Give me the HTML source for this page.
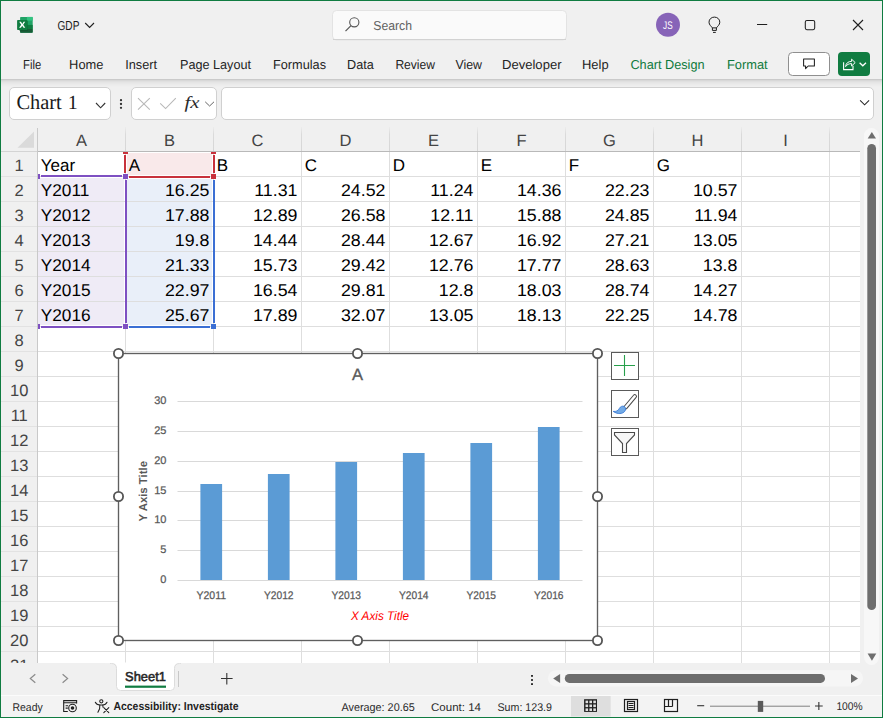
<!DOCTYPE html>
<html><head><meta charset="utf-8"><title>GDP - Excel</title>
<style>html,body{margin:0;padding:0;background:#f0f0f0;overflow:hidden;width:883px;height:718px;}svg{display:block}</style>
</head><body>
<svg width="883" height="718" viewBox="0 0 883 718" text-rendering="geometricPrecision">
<rect x="0" y="0" width="883" height="718" fill="#f0f0f0"/>
<g>
<rect x="20.1" y="16.9" width="12.6" height="15.8" rx="0.8" fill="#21a366"/>
<rect x="26.9" y="16.9" width="5.8" height="3.7" fill="#33c481"/>
<rect x="20.1" y="24.9" width="12.6" height="4.1" fill="#107c41"/>
<rect x="20.1" y="29" width="12.6" height="3.7" rx="0.6" fill="#185c37"/>
<rect x="19" y="21" width="9" height="10" fill="#0a4a26" opacity="0.35"/>
<rect x="17.1" y="20" width="10.4" height="10" rx="0.8" fill="#107c41"/>
<path d="M19.2 21.8 L21 21.8 L22.3 23.9 L23.6 21.8 L25.2 21.8 L23.2 24.8 L25.3 27.8 L23.5 27.8 L22.2 25.7 L20.9 27.8 L19.1 27.8 L21.2 24.8 Z" fill="#fff"/>
</g>
<text x="57.5" y="29.8" font-family='"Liberation Sans", sans-serif' font-size="13" fill="#1a1a1a" text-anchor="start" font-weight="normal" font-style="normal" textLength="21.9" lengthAdjust="spacingAndGlyphs" >GDP</text>
<path d="M85.2 23 L89.6 27.5 L94 23" fill="none" stroke="#1f1f1f" stroke-width="1.1"/>
<rect x="332.5" y="10.5" width="234" height="29.5" rx="4" fill="#fafafa" stroke="#e3e3e3"/>
<path d="M333 39.5 L566 39.5" stroke="#d2d2d2"/>
<circle cx="354.3" cy="22.3" r="4.6" fill="none" stroke="#555" stroke-width="1.1"/>
<path d="M351 25.6 L345.5 31.2" stroke="#555" stroke-width="1.2"/>
<text x="373.3" y="30" font-family='"Liberation Sans", sans-serif' font-size="13" fill="#616161" text-anchor="start" font-weight="normal" font-style="normal" textLength="38.7" lengthAdjust="spacingAndGlyphs" >Search</text>
<circle cx="668" cy="24.8" r="12" fill="#8764b8"/>
<text x="667.9" y="28.8" font-family='"Liberation Sans", sans-serif' font-size="11" fill="#fff" text-anchor="middle" font-weight="normal" font-style="normal" textLength="9.6" lengthAdjust="spacingAndGlyphs" >JS</text>
<path d="M712.4 27.9 C711.6 26.6 709 24.9 709 22.2 C709 19.2 711.4 17.1 714.4 17.1 C717.4 17.1 719.8 19.2 719.8 22.2 C719.8 24.9 717.2 26.6 716.4 27.9 Z M712.4 27.9 L712.4 30.4 L716.4 30.4 L716.4 27.9" fill="none" stroke="#1f1f1f" stroke-width="1"/>
<path d="M713 32.4 L715.8 32.4" stroke="#1f1f1f" stroke-width="1"/>
<path d="M757 24.5 L767.2 24.5" stroke="#1f1f1f" stroke-width="1.05"/>
<rect x="805.3" y="20.5" width="9.4" height="9.2" rx="1.6" fill="none" stroke="#1f1f1f" stroke-width="1.05"/>
<path d="M853 20 L863 30 M863 20 L853 30" stroke="#1f1f1f" stroke-width="1.1"/>
<text x="23.1" y="69.2" font-family='"Liberation Sans", sans-serif' font-size="13" fill="#242424" text-anchor="start" font-weight="normal" font-style="normal" textLength="18.1" lengthAdjust="spacingAndGlyphs" >File</text>
<text x="69.1" y="69.2" font-family='"Liberation Sans", sans-serif' font-size="13" fill="#242424" text-anchor="start" font-weight="normal" font-style="normal" textLength="34.3" lengthAdjust="spacingAndGlyphs" >Home</text>
<text x="125.2" y="69.2" font-family='"Liberation Sans", sans-serif' font-size="13" fill="#242424" text-anchor="start" font-weight="normal" font-style="normal" textLength="31.8" lengthAdjust="spacingAndGlyphs" >Insert</text>
<text x="180" y="69.2" font-family='"Liberation Sans", sans-serif' font-size="13" fill="#242424" text-anchor="start" font-weight="normal" font-style="normal" textLength="71" lengthAdjust="spacingAndGlyphs" >Page Layout</text>
<text x="273" y="69.2" font-family='"Liberation Sans", sans-serif' font-size="13" fill="#242424" text-anchor="start" font-weight="normal" font-style="normal" textLength="53" lengthAdjust="spacingAndGlyphs" >Formulas</text>
<text x="347" y="69.2" font-family='"Liberation Sans", sans-serif' font-size="13" fill="#242424" text-anchor="start" font-weight="normal" font-style="normal" textLength="26.7" lengthAdjust="spacingAndGlyphs" >Data</text>
<text x="395.4" y="69.2" font-family='"Liberation Sans", sans-serif' font-size="13" fill="#242424" text-anchor="start" font-weight="normal" font-style="normal" textLength="39.6" lengthAdjust="spacingAndGlyphs" >Review</text>
<text x="455.5" y="69.2" font-family='"Liberation Sans", sans-serif' font-size="13" fill="#242424" text-anchor="start" font-weight="normal" font-style="normal" textLength="26.5" lengthAdjust="spacingAndGlyphs" >View</text>
<text x="502" y="69.2" font-family='"Liberation Sans", sans-serif' font-size="13" fill="#242424" text-anchor="start" font-weight="normal" font-style="normal" textLength="59.5" lengthAdjust="spacingAndGlyphs" >Developer</text>
<text x="582" y="69.2" font-family='"Liberation Sans", sans-serif' font-size="13" fill="#242424" text-anchor="start" font-weight="normal" font-style="normal" textLength="26.6" lengthAdjust="spacingAndGlyphs" >Help</text>
<text x="630.4" y="69.2" font-family='"Liberation Sans", sans-serif' font-size="13" fill="#0e7a3c" text-anchor="start" font-weight="normal" font-style="normal" textLength="74.2" lengthAdjust="spacingAndGlyphs" >Chart Design</text>
<text x="727" y="69.2" font-family='"Liberation Sans", sans-serif' font-size="13" fill="#0e7a3c" text-anchor="start" font-weight="normal" font-style="normal" textLength="40.6" lengthAdjust="spacingAndGlyphs" >Format</text>
<rect x="788.5" y="52.5" width="41" height="23" rx="4" fill="#fff" stroke="#8f8f8f"/>
<path d="M803.6 59 L814.4 59 L814.4 66 L808.2 66 L805.6 68.6 L805.6 66 L803.6 66 Z" fill="none" stroke="#1f1f1f" stroke-width="1.05" stroke-linejoin="round"/>
<rect x="838" y="52" width="32" height="24" rx="4" fill="#107c41"/>
<path d="M843.6 62.2 L843.6 69.6 L853 69.6 L853 65.8" fill="none" stroke="#fff" stroke-width="1.1"/>
<path d="M845.6 66.6 C846 63 848.2 61.4 851.6 61.4 L851.6 59.2 L855.2 62.6 L851.6 66 L851.6 63.6 C849 63.6 846.8 64.6 845.6 66.6 Z" fill="none" stroke="#fff" stroke-width="1" stroke-linejoin="round"/>
<path d="M859.6 62.8 L862.8 65.8 L866 62.8" fill="none" stroke="#fff" stroke-width="1.3"/>
<rect x="1" y="79" width="881" height="1" fill="#cacaca"/>
<rect x="1" y="80" width="881" height="1" fill="#d8d8d8"/>
<rect x="1" y="81" width="881" height="1" fill="#e0e0e0"/>
<rect x="1" y="82" width="881" height="1" fill="#e5e5e5"/>
<rect x="1" y="83" width="881" height="1" fill="#e8e8e8"/>
<rect x="1" y="84" width="881" height="1" fill="#ebebeb"/>
<rect x="1" y="85" width="881" height="1" fill="#ededed"/>
<rect x="1" y="86" width="881" height="1" fill="#efefef"/>
<rect x="9.5" y="87.5" width="101" height="32" rx="4.5" fill="#fff" stroke="#d0d0d0"/>
<text x="16.4" y="108.8" font-family='"Liberation Serif", serif' font-size="21" fill="#1a1a1a" text-anchor="start" font-weight="normal" font-style="normal" textLength="45.4" lengthAdjust="spacingAndGlyphs" >Chart</text>
<text x="67.7" y="108.8" font-family='"Liberation Serif", serif' font-size="20" fill="#1a1a1a" text-anchor="start" font-weight="normal" font-style="normal" >1</text>
<path d="M96 103 L100.6 107.8 L105.2 103" fill="none" stroke="#333" stroke-width="1.1"/>
<circle cx="121" cy="100.2" r="1.15" fill="#333"/>
<circle cx="121" cy="104" r="1.15" fill="#333"/>
<circle cx="121" cy="107.8" r="1.15" fill="#333"/>
<rect x="131.5" y="87.5" width="85" height="32" rx="4.5" fill="#fff" stroke="#d0d0d0"/>
<path d="M138 98.2 L149.8 109.6 M149.8 98.2 L138 109.6" stroke="#b8b8b8" stroke-width="1.1"/>
<path d="M160.2 103.4 L165.6 108.6 L175.8 98.2" fill="none" stroke="#b8b8b8" stroke-width="1.1"/>
<text x="184.6" y="108.2" font-family='"Liberation Serif", serif' font-size="17" fill="#2a2a2a" text-anchor="start" font-weight="normal" font-style="italic" textLength="15" lengthAdjust="spacingAndGlyphs" >fx</text>
<path d="M205.2 101.8 L209.6 106 L214 101.8" fill="none" stroke="#666" stroke-width="1"/>
<rect x="221.5" y="87.5" width="652" height="32" rx="4.5" fill="#fff" stroke="#d0d0d0"/>
<path d="M860.1 100.4 L864.6 104.8 L869.1 100.4" fill="none" stroke="#262626" stroke-width="1.05"/>
<rect x="38" y="152" width="822" height="511" fill="#fff"/>
<rect x="38" y="178" width="86" height="147" fill="#efebf6"/>
<rect x="127" y="179" width="85" height="146" fill="#e9eff9"/>
<rect x="127" y="153" width="85" height="22" fill="#f9e9ea"/>
<rect x="125" y="152" width="1" height="511" fill="#dedede"/>
<rect x="213" y="152" width="1" height="511" fill="#dedede"/>
<rect x="301" y="152" width="1" height="511" fill="#dedede"/>
<rect x="389" y="152" width="1" height="511" fill="#dedede"/>
<rect x="477" y="152" width="1" height="511" fill="#dedede"/>
<rect x="565" y="152" width="1" height="511" fill="#dedede"/>
<rect x="653" y="152" width="1" height="511" fill="#dedede"/>
<rect x="741" y="152" width="1" height="511" fill="#dedede"/>
<rect x="829" y="152" width="1" height="511" fill="#dedede"/>
<rect x="38" y="176" width="822" height="1" fill="#dedede"/>
<rect x="38" y="201" width="822" height="1" fill="#dedede"/>
<rect x="38" y="226" width="822" height="1" fill="#dedede"/>
<rect x="38" y="251" width="822" height="1" fill="#dedede"/>
<rect x="38" y="276" width="822" height="1" fill="#dedede"/>
<rect x="38" y="301" width="822" height="1" fill="#dedede"/>
<rect x="38" y="326" width="822" height="1" fill="#dedede"/>
<rect x="38" y="351" width="822" height="1" fill="#dedede"/>
<rect x="38" y="376" width="822" height="1" fill="#dedede"/>
<rect x="38" y="401" width="822" height="1" fill="#dedede"/>
<rect x="38" y="426" width="822" height="1" fill="#dedede"/>
<rect x="38" y="451" width="822" height="1" fill="#dedede"/>
<rect x="38" y="476" width="822" height="1" fill="#dedede"/>
<rect x="38" y="501" width="822" height="1" fill="#dedede"/>
<rect x="38" y="526" width="822" height="1" fill="#dedede"/>
<rect x="38" y="551" width="822" height="1" fill="#dedede"/>
<rect x="38" y="576" width="822" height="1" fill="#dedede"/>
<rect x="38" y="601" width="822" height="1" fill="#dedede"/>
<rect x="38" y="626" width="822" height="1" fill="#dedede"/>
<rect x="38" y="651" width="822" height="1" fill="#dedede"/>
<linearGradient id="hs" x1="0" y1="0" x2="0" y2="1"><stop offset="0" stop-color="#ececec"/><stop offset="0.3" stop-color="#dadada"/><stop offset="1" stop-color="#d6d6d6"/></linearGradient>
<rect x="125" y="127" width="1" height="24" fill="url(#hs)"/>
<rect x="213" y="127" width="1" height="24" fill="url(#hs)"/>
<rect x="301" y="127" width="1" height="24" fill="url(#hs)"/>
<rect x="389" y="127" width="1" height="24" fill="url(#hs)"/>
<rect x="477" y="127" width="1" height="24" fill="url(#hs)"/>
<rect x="565" y="127" width="1" height="24" fill="url(#hs)"/>
<rect x="653" y="127" width="1" height="24" fill="url(#hs)"/>
<rect x="741" y="127" width="1" height="24" fill="url(#hs)"/>
<rect x="829" y="127" width="1" height="24" fill="url(#hs)"/>
<rect x="38" y="151" width="822" height="1" fill="#b9b9b9"/>
<rect x="1" y="151" width="36" height="1" fill="#d4d4d4"/>
<rect x="37" y="128" width="1" height="535" fill="#c9c9c9"/>
<path d="M34 131.4 L34 147.7 L17.5 147.7 Z" fill="#dadada"/>
<text x="81.5" y="145.9" font-family='"Liberation Sans", sans-serif' font-size="16.5" fill="#444" text-anchor="middle" font-weight="normal" font-style="normal" >A</text>
<text x="169.5" y="145.9" font-family='"Liberation Sans", sans-serif' font-size="16.5" fill="#444" text-anchor="middle" font-weight="normal" font-style="normal" >B</text>
<text x="257.5" y="145.9" font-family='"Liberation Sans", sans-serif' font-size="16.5" fill="#444" text-anchor="middle" font-weight="normal" font-style="normal" >C</text>
<text x="345.5" y="145.9" font-family='"Liberation Sans", sans-serif' font-size="16.5" fill="#444" text-anchor="middle" font-weight="normal" font-style="normal" >D</text>
<text x="433.5" y="145.9" font-family='"Liberation Sans", sans-serif' font-size="16.5" fill="#444" text-anchor="middle" font-weight="normal" font-style="normal" >E</text>
<text x="521.5" y="145.9" font-family='"Liberation Sans", sans-serif' font-size="16.5" fill="#444" text-anchor="middle" font-weight="normal" font-style="normal" >F</text>
<text x="609.5" y="145.9" font-family='"Liberation Sans", sans-serif' font-size="16.5" fill="#444" text-anchor="middle" font-weight="normal" font-style="normal" >G</text>
<text x="697.5" y="145.9" font-family='"Liberation Sans", sans-serif' font-size="16.5" fill="#444" text-anchor="middle" font-weight="normal" font-style="normal" >H</text>
<text x="785.5" y="145.9" font-family='"Liberation Sans", sans-serif' font-size="16.5" fill="#444" text-anchor="middle" font-weight="normal" font-style="normal" >I</text>
<rect x="1" y="176" width="36" height="1" fill="#e2e2e2"/>
<rect x="1" y="201" width="36" height="1" fill="#e2e2e2"/>
<rect x="1" y="226" width="36" height="1" fill="#e2e2e2"/>
<rect x="1" y="251" width="36" height="1" fill="#e2e2e2"/>
<rect x="1" y="276" width="36" height="1" fill="#e2e2e2"/>
<rect x="1" y="301" width="36" height="1" fill="#e2e2e2"/>
<rect x="1" y="326" width="36" height="1" fill="#e2e2e2"/>
<rect x="1" y="351" width="36" height="1" fill="#e2e2e2"/>
<rect x="1" y="376" width="36" height="1" fill="#e2e2e2"/>
<rect x="1" y="401" width="36" height="1" fill="#e2e2e2"/>
<rect x="1" y="426" width="36" height="1" fill="#e2e2e2"/>
<rect x="1" y="451" width="36" height="1" fill="#e2e2e2"/>
<rect x="1" y="476" width="36" height="1" fill="#e2e2e2"/>
<rect x="1" y="501" width="36" height="1" fill="#e2e2e2"/>
<rect x="1" y="526" width="36" height="1" fill="#e2e2e2"/>
<rect x="1" y="551" width="36" height="1" fill="#e2e2e2"/>
<rect x="1" y="576" width="36" height="1" fill="#e2e2e2"/>
<rect x="1" y="601" width="36" height="1" fill="#e2e2e2"/>
<rect x="1" y="626" width="36" height="1" fill="#e2e2e2"/>
<rect x="1" y="651" width="36" height="1" fill="#e2e2e2"/>
<clipPath id="rh"><rect x="0" y="152" width="40" height="511"/></clipPath><g clip-path="url(#rh)">
<text x="19.2" y="170.8" font-family='"Liberation Sans", sans-serif' font-size="16.5" fill="#444" text-anchor="middle" font-weight="normal" font-style="normal" >1</text>
<text x="19.2" y="195.8" font-family='"Liberation Sans", sans-serif' font-size="16.5" fill="#444" text-anchor="middle" font-weight="normal" font-style="normal" >2</text>
<text x="19.2" y="220.8" font-family='"Liberation Sans", sans-serif' font-size="16.5" fill="#444" text-anchor="middle" font-weight="normal" font-style="normal" >3</text>
<text x="19.2" y="245.8" font-family='"Liberation Sans", sans-serif' font-size="16.5" fill="#444" text-anchor="middle" font-weight="normal" font-style="normal" >4</text>
<text x="19.2" y="270.8" font-family='"Liberation Sans", sans-serif' font-size="16.5" fill="#444" text-anchor="middle" font-weight="normal" font-style="normal" >5</text>
<text x="19.2" y="295.8" font-family='"Liberation Sans", sans-serif' font-size="16.5" fill="#444" text-anchor="middle" font-weight="normal" font-style="normal" >6</text>
<text x="19.2" y="320.8" font-family='"Liberation Sans", sans-serif' font-size="16.5" fill="#444" text-anchor="middle" font-weight="normal" font-style="normal" >7</text>
<text x="19.2" y="345.8" font-family='"Liberation Sans", sans-serif' font-size="16.5" fill="#444" text-anchor="middle" font-weight="normal" font-style="normal" >8</text>
<text x="19.2" y="370.8" font-family='"Liberation Sans", sans-serif' font-size="16.5" fill="#444" text-anchor="middle" font-weight="normal" font-style="normal" >9</text>
<text x="19.2" y="395.8" font-family='"Liberation Sans", sans-serif' font-size="16.5" fill="#444" text-anchor="middle" font-weight="normal" font-style="normal" >10</text>
<text x="19.2" y="420.8" font-family='"Liberation Sans", sans-serif' font-size="16.5" fill="#444" text-anchor="middle" font-weight="normal" font-style="normal" >11</text>
<text x="19.2" y="445.8" font-family='"Liberation Sans", sans-serif' font-size="16.5" fill="#444" text-anchor="middle" font-weight="normal" font-style="normal" >12</text>
<text x="19.2" y="470.8" font-family='"Liberation Sans", sans-serif' font-size="16.5" fill="#444" text-anchor="middle" font-weight="normal" font-style="normal" >13</text>
<text x="19.2" y="495.8" font-family='"Liberation Sans", sans-serif' font-size="16.5" fill="#444" text-anchor="middle" font-weight="normal" font-style="normal" >14</text>
<text x="19.2" y="520.8" font-family='"Liberation Sans", sans-serif' font-size="16.5" fill="#444" text-anchor="middle" font-weight="normal" font-style="normal" >15</text>
<text x="19.2" y="545.8" font-family='"Liberation Sans", sans-serif' font-size="16.5" fill="#444" text-anchor="middle" font-weight="normal" font-style="normal" >16</text>
<text x="19.2" y="570.8" font-family='"Liberation Sans", sans-serif' font-size="16.5" fill="#444" text-anchor="middle" font-weight="normal" font-style="normal" >17</text>
<text x="19.2" y="595.8" font-family='"Liberation Sans", sans-serif' font-size="16.5" fill="#444" text-anchor="middle" font-weight="normal" font-style="normal" >18</text>
<text x="19.2" y="620.8" font-family='"Liberation Sans", sans-serif' font-size="16.5" fill="#444" text-anchor="middle" font-weight="normal" font-style="normal" >19</text>
<text x="19.2" y="645.8" font-family='"Liberation Sans", sans-serif' font-size="16.5" fill="#444" text-anchor="middle" font-weight="normal" font-style="normal" >20</text>
<text x="19.2" y="670.8" font-family='"Liberation Sans", sans-serif' font-size="16.5" fill="#444" text-anchor="middle" font-weight="normal" font-style="normal" >21</text>
</g>
<text x="40.7" y="170.8" font-family='"Liberation Sans", sans-serif' font-size="17" fill="#000" text-anchor="start" font-weight="normal" font-style="normal" >Year</text>
<text x="128.7" y="170.8" font-family='"Liberation Sans", sans-serif' font-size="17" fill="#000" text-anchor="start" font-weight="normal" font-style="normal" >A</text>
<text x="216.7" y="170.8" font-family='"Liberation Sans", sans-serif' font-size="17" fill="#000" text-anchor="start" font-weight="normal" font-style="normal" >B</text>
<text x="304.7" y="170.8" font-family='"Liberation Sans", sans-serif' font-size="17" fill="#000" text-anchor="start" font-weight="normal" font-style="normal" >C</text>
<text x="392.7" y="170.8" font-family='"Liberation Sans", sans-serif' font-size="17" fill="#000" text-anchor="start" font-weight="normal" font-style="normal" >D</text>
<text x="480.7" y="170.8" font-family='"Liberation Sans", sans-serif' font-size="17" fill="#000" text-anchor="start" font-weight="normal" font-style="normal" >E</text>
<text x="568.7" y="170.8" font-family='"Liberation Sans", sans-serif' font-size="17" fill="#000" text-anchor="start" font-weight="normal" font-style="normal" >F</text>
<text x="656.7" y="170.8" font-family='"Liberation Sans", sans-serif' font-size="17" fill="#000" text-anchor="start" font-weight="normal" font-style="normal" >G</text>
<text x="40.7" y="195.8" font-family='"Liberation Sans", sans-serif' font-size="17" fill="#000" text-anchor="start" font-weight="normal" font-style="normal" textLength="48.61" lengthAdjust="spacingAndGlyphs" >Y2011</text>
<text x="209.4" y="195.8" font-family='"Liberation Sans", sans-serif' font-size="17" fill="#000" text-anchor="end" font-weight="normal" font-style="normal" textLength="44.46" lengthAdjust="spacingAndGlyphs" >16.25</text>
<text x="297.4" y="195.8" font-family='"Liberation Sans", sans-serif' font-size="17" fill="#000" text-anchor="end" font-weight="normal" font-style="normal" textLength="43.14" lengthAdjust="spacingAndGlyphs" >11.31</text>
<text x="385.4" y="195.8" font-family='"Liberation Sans", sans-serif' font-size="17" fill="#000" text-anchor="end" font-weight="normal" font-style="normal" textLength="44.46" lengthAdjust="spacingAndGlyphs" >24.52</text>
<text x="473.4" y="195.8" font-family='"Liberation Sans", sans-serif' font-size="17" fill="#000" text-anchor="end" font-weight="normal" font-style="normal" textLength="43.14" lengthAdjust="spacingAndGlyphs" >11.24</text>
<text x="561.4" y="195.8" font-family='"Liberation Sans", sans-serif' font-size="17" fill="#000" text-anchor="end" font-weight="normal" font-style="normal" textLength="44.46" lengthAdjust="spacingAndGlyphs" >14.36</text>
<text x="649.4" y="195.8" font-family='"Liberation Sans", sans-serif' font-size="17" fill="#000" text-anchor="end" font-weight="normal" font-style="normal" textLength="44.46" lengthAdjust="spacingAndGlyphs" >22.23</text>
<text x="737.4" y="195.8" font-family='"Liberation Sans", sans-serif' font-size="17" fill="#000" text-anchor="end" font-weight="normal" font-style="normal" textLength="44.46" lengthAdjust="spacingAndGlyphs" >10.57</text>
<text x="40.7" y="220.8" font-family='"Liberation Sans", sans-serif' font-size="17" fill="#000" text-anchor="start" font-weight="normal" font-style="normal" textLength="49.89" lengthAdjust="spacingAndGlyphs" >Y2012</text>
<text x="209.4" y="220.8" font-family='"Liberation Sans", sans-serif' font-size="17" fill="#000" text-anchor="end" font-weight="normal" font-style="normal" textLength="44.46" lengthAdjust="spacingAndGlyphs" >17.88</text>
<text x="297.4" y="220.8" font-family='"Liberation Sans", sans-serif' font-size="17" fill="#000" text-anchor="end" font-weight="normal" font-style="normal" textLength="44.46" lengthAdjust="spacingAndGlyphs" >12.89</text>
<text x="385.4" y="220.8" font-family='"Liberation Sans", sans-serif' font-size="17" fill="#000" text-anchor="end" font-weight="normal" font-style="normal" textLength="44.46" lengthAdjust="spacingAndGlyphs" >26.58</text>
<text x="473.4" y="220.8" font-family='"Liberation Sans", sans-serif' font-size="17" fill="#000" text-anchor="end" font-weight="normal" font-style="normal" textLength="43.14" lengthAdjust="spacingAndGlyphs" >12.11</text>
<text x="561.4" y="220.8" font-family='"Liberation Sans", sans-serif' font-size="17" fill="#000" text-anchor="end" font-weight="normal" font-style="normal" textLength="44.46" lengthAdjust="spacingAndGlyphs" >15.88</text>
<text x="649.4" y="220.8" font-family='"Liberation Sans", sans-serif' font-size="17" fill="#000" text-anchor="end" font-weight="normal" font-style="normal" textLength="44.46" lengthAdjust="spacingAndGlyphs" >24.85</text>
<text x="737.4" y="220.8" font-family='"Liberation Sans", sans-serif' font-size="17" fill="#000" text-anchor="end" font-weight="normal" font-style="normal" textLength="43.14" lengthAdjust="spacingAndGlyphs" >11.94</text>
<text x="40.7" y="245.8" font-family='"Liberation Sans", sans-serif' font-size="17" fill="#000" text-anchor="start" font-weight="normal" font-style="normal" textLength="49.89" lengthAdjust="spacingAndGlyphs" >Y2013</text>
<text x="209.4" y="245.8" font-family='"Liberation Sans", sans-serif' font-size="17" fill="#000" text-anchor="end" font-weight="normal" font-style="normal" textLength="34.58" lengthAdjust="spacingAndGlyphs" >19.8</text>
<text x="297.4" y="245.8" font-family='"Liberation Sans", sans-serif' font-size="17" fill="#000" text-anchor="end" font-weight="normal" font-style="normal" textLength="44.46" lengthAdjust="spacingAndGlyphs" >14.44</text>
<text x="385.4" y="245.8" font-family='"Liberation Sans", sans-serif' font-size="17" fill="#000" text-anchor="end" font-weight="normal" font-style="normal" textLength="44.46" lengthAdjust="spacingAndGlyphs" >28.44</text>
<text x="473.4" y="245.8" font-family='"Liberation Sans", sans-serif' font-size="17" fill="#000" text-anchor="end" font-weight="normal" font-style="normal" textLength="44.46" lengthAdjust="spacingAndGlyphs" >12.67</text>
<text x="561.4" y="245.8" font-family='"Liberation Sans", sans-serif' font-size="17" fill="#000" text-anchor="end" font-weight="normal" font-style="normal" textLength="44.46" lengthAdjust="spacingAndGlyphs" >16.92</text>
<text x="649.4" y="245.8" font-family='"Liberation Sans", sans-serif' font-size="17" fill="#000" text-anchor="end" font-weight="normal" font-style="normal" textLength="44.46" lengthAdjust="spacingAndGlyphs" >27.21</text>
<text x="737.4" y="245.8" font-family='"Liberation Sans", sans-serif' font-size="17" fill="#000" text-anchor="end" font-weight="normal" font-style="normal" textLength="44.46" lengthAdjust="spacingAndGlyphs" >13.05</text>
<text x="40.7" y="270.8" font-family='"Liberation Sans", sans-serif' font-size="17" fill="#000" text-anchor="start" font-weight="normal" font-style="normal" textLength="49.89" lengthAdjust="spacingAndGlyphs" >Y2014</text>
<text x="209.4" y="270.8" font-family='"Liberation Sans", sans-serif' font-size="17" fill="#000" text-anchor="end" font-weight="normal" font-style="normal" textLength="44.46" lengthAdjust="spacingAndGlyphs" >21.33</text>
<text x="297.4" y="270.8" font-family='"Liberation Sans", sans-serif' font-size="17" fill="#000" text-anchor="end" font-weight="normal" font-style="normal" textLength="44.46" lengthAdjust="spacingAndGlyphs" >15.73</text>
<text x="385.4" y="270.8" font-family='"Liberation Sans", sans-serif' font-size="17" fill="#000" text-anchor="end" font-weight="normal" font-style="normal" textLength="44.46" lengthAdjust="spacingAndGlyphs" >29.42</text>
<text x="473.4" y="270.8" font-family='"Liberation Sans", sans-serif' font-size="17" fill="#000" text-anchor="end" font-weight="normal" font-style="normal" textLength="44.46" lengthAdjust="spacingAndGlyphs" >12.76</text>
<text x="561.4" y="270.8" font-family='"Liberation Sans", sans-serif' font-size="17" fill="#000" text-anchor="end" font-weight="normal" font-style="normal" textLength="44.46" lengthAdjust="spacingAndGlyphs" >17.77</text>
<text x="649.4" y="270.8" font-family='"Liberation Sans", sans-serif' font-size="17" fill="#000" text-anchor="end" font-weight="normal" font-style="normal" textLength="44.46" lengthAdjust="spacingAndGlyphs" >28.63</text>
<text x="737.4" y="270.8" font-family='"Liberation Sans", sans-serif' font-size="17" fill="#000" text-anchor="end" font-weight="normal" font-style="normal" textLength="34.58" lengthAdjust="spacingAndGlyphs" >13.8</text>
<text x="40.7" y="295.8" font-family='"Liberation Sans", sans-serif' font-size="17" fill="#000" text-anchor="start" font-weight="normal" font-style="normal" textLength="49.89" lengthAdjust="spacingAndGlyphs" >Y2015</text>
<text x="209.4" y="295.8" font-family='"Liberation Sans", sans-serif' font-size="17" fill="#000" text-anchor="end" font-weight="normal" font-style="normal" textLength="44.46" lengthAdjust="spacingAndGlyphs" >22.97</text>
<text x="297.4" y="295.8" font-family='"Liberation Sans", sans-serif' font-size="17" fill="#000" text-anchor="end" font-weight="normal" font-style="normal" textLength="44.46" lengthAdjust="spacingAndGlyphs" >16.54</text>
<text x="385.4" y="295.8" font-family='"Liberation Sans", sans-serif' font-size="17" fill="#000" text-anchor="end" font-weight="normal" font-style="normal" textLength="44.46" lengthAdjust="spacingAndGlyphs" >29.81</text>
<text x="473.4" y="295.8" font-family='"Liberation Sans", sans-serif' font-size="17" fill="#000" text-anchor="end" font-weight="normal" font-style="normal" textLength="34.58" lengthAdjust="spacingAndGlyphs" >12.8</text>
<text x="561.4" y="295.8" font-family='"Liberation Sans", sans-serif' font-size="17" fill="#000" text-anchor="end" font-weight="normal" font-style="normal" textLength="44.46" lengthAdjust="spacingAndGlyphs" >18.03</text>
<text x="649.4" y="295.8" font-family='"Liberation Sans", sans-serif' font-size="17" fill="#000" text-anchor="end" font-weight="normal" font-style="normal" textLength="44.46" lengthAdjust="spacingAndGlyphs" >28.74</text>
<text x="737.4" y="295.8" font-family='"Liberation Sans", sans-serif' font-size="17" fill="#000" text-anchor="end" font-weight="normal" font-style="normal" textLength="44.46" lengthAdjust="spacingAndGlyphs" >14.27</text>
<text x="40.7" y="320.8" font-family='"Liberation Sans", sans-serif' font-size="17" fill="#000" text-anchor="start" font-weight="normal" font-style="normal" textLength="49.89" lengthAdjust="spacingAndGlyphs" >Y2016</text>
<text x="209.4" y="320.8" font-family='"Liberation Sans", sans-serif' font-size="17" fill="#000" text-anchor="end" font-weight="normal" font-style="normal" textLength="44.46" lengthAdjust="spacingAndGlyphs" >25.67</text>
<text x="297.4" y="320.8" font-family='"Liberation Sans", sans-serif' font-size="17" fill="#000" text-anchor="end" font-weight="normal" font-style="normal" textLength="44.46" lengthAdjust="spacingAndGlyphs" >17.89</text>
<text x="385.4" y="320.8" font-family='"Liberation Sans", sans-serif' font-size="17" fill="#000" text-anchor="end" font-weight="normal" font-style="normal" textLength="44.46" lengthAdjust="spacingAndGlyphs" >32.07</text>
<text x="473.4" y="320.8" font-family='"Liberation Sans", sans-serif' font-size="17" fill="#000" text-anchor="end" font-weight="normal" font-style="normal" textLength="44.46" lengthAdjust="spacingAndGlyphs" >13.05</text>
<text x="561.4" y="320.8" font-family='"Liberation Sans", sans-serif' font-size="17" fill="#000" text-anchor="end" font-weight="normal" font-style="normal" textLength="44.46" lengthAdjust="spacingAndGlyphs" >18.13</text>
<text x="649.4" y="320.8" font-family='"Liberation Sans", sans-serif' font-size="17" fill="#000" text-anchor="end" font-weight="normal" font-style="normal" textLength="44.46" lengthAdjust="spacingAndGlyphs" >22.25</text>
<text x="737.4" y="320.8" font-family='"Liberation Sans", sans-serif' font-size="17" fill="#000" text-anchor="end" font-weight="normal" font-style="normal" textLength="44.46" lengthAdjust="spacingAndGlyphs" >14.78</text>
<rect x="41" y="175" width="81" height="2" fill="#7e50c2"/>
<rect x="41" y="326" width="81" height="2" fill="#7e50c2"/>
<rect x="125" y="180" width="2" height="143" fill="#7e50c2"/>
<rect x="38" y="174" width="2" height="5" fill="#7e50c2"/>
<rect x="38" y="324" width="2" height="5" fill="#7e50c2"/>
<rect x="123" y="324" width="5" height="5" fill="#7e50c2"/>
<rect x="213" y="180" width="2" height="143" fill="#3b6fd4"/>
<rect x="129" y="326" width="81" height="2" fill="#3b6fd4"/>
<rect x="211" y="324" width="5" height="5" fill="#3b6fd4"/>
<rect x="124" y="155" width="2" height="18" fill="#c8323c"/>
<rect x="213" y="155" width="2" height="18" fill="#c8323c"/>
<rect x="129" y="176" width="81" height="2" fill="#c8323c"/>
<rect x="123" y="152" width="5" height="2" fill="#c8323c"/>
<rect x="211" y="152" width="5" height="2" fill="#c8323c"/>
<rect x="211" y="174" width="5" height="5" fill="#c8323c"/>
<rect x="123" y="174" width="5" height="5" fill="#7e50c2"/>
<rect x="118.5" y="353.5" width="479.0" height="287.0" fill="#fff" stroke="#5f5f5f" stroke-width="1.35"/>
<text x="357.6" y="380" font-family='"Liberation Sans", sans-serif' font-size="16.5" fill="#595959" text-anchor="middle" font-weight="normal" font-style="normal" stroke="#595959" stroke-width="0.35">A</text>
<rect x="177.5" y="580" width="405.0" height="1" fill="#d9d9d9"/>
<text x="166.4" y="583.0" font-family='"Liberation Sans", sans-serif' font-size="11" fill="#595959" text-anchor="end" font-weight="normal" font-style="normal" stroke="#595959" stroke-width="0.25">0</text>
<rect x="177.5" y="550" width="405.0" height="1" fill="#d9d9d9"/>
<text x="166.4" y="553.1666666666666" font-family='"Liberation Sans", sans-serif' font-size="11" fill="#595959" text-anchor="end" font-weight="normal" font-style="normal" stroke="#595959" stroke-width="0.25">5</text>
<rect x="177.5" y="520" width="405.0" height="1" fill="#d9d9d9"/>
<text x="166.4" y="523.3333333333334" font-family='"Liberation Sans", sans-serif' font-size="11" fill="#595959" text-anchor="end" font-weight="normal" font-style="normal" stroke="#595959" stroke-width="0.25">10</text>
<rect x="177.5" y="491" width="405.0" height="1" fill="#d9d9d9"/>
<text x="166.4" y="493.5" font-family='"Liberation Sans", sans-serif' font-size="11" fill="#595959" text-anchor="end" font-weight="normal" font-style="normal" stroke="#595959" stroke-width="0.25">15</text>
<rect x="177.5" y="461" width="405.0" height="1" fill="#d9d9d9"/>
<text x="166.4" y="463.6666666666667" font-family='"Liberation Sans", sans-serif' font-size="11" fill="#595959" text-anchor="end" font-weight="normal" font-style="normal" stroke="#595959" stroke-width="0.25">20</text>
<rect x="177.5" y="431" width="405.0" height="1" fill="#d9d9d9"/>
<text x="166.4" y="433.83333333333337" font-family='"Liberation Sans", sans-serif' font-size="11" fill="#595959" text-anchor="end" font-weight="normal" font-style="normal" stroke="#595959" stroke-width="0.25">25</text>
<rect x="177.5" y="401" width="405.0" height="1" fill="#d9d9d9"/>
<text x="166.4" y="404.0" font-family='"Liberation Sans", sans-serif' font-size="11" fill="#595959" text-anchor="end" font-weight="normal" font-style="normal" stroke="#595959" stroke-width="0.25">30</text>
<rect x="200.40" y="484" width="21.7" height="96" fill="#5b9bd5"/>
<text x="211.25" y="598.9" font-family='"Liberation Sans", sans-serif' font-size="11" fill="#595959" text-anchor="middle" font-weight="normal" font-style="normal" textLength="29.6" lengthAdjust="spacingAndGlyphs" stroke="#595959" stroke-width="0.25">Y2011</text>
<rect x="267.90" y="474" width="21.7" height="106" fill="#5b9bd5"/>
<text x="278.75" y="598.9" font-family='"Liberation Sans", sans-serif' font-size="11" fill="#595959" text-anchor="middle" font-weight="normal" font-style="normal" textLength="29.6" lengthAdjust="spacingAndGlyphs" stroke="#595959" stroke-width="0.25">Y2012</text>
<rect x="335.40" y="462" width="21.7" height="118" fill="#5b9bd5"/>
<text x="346.25" y="598.9" font-family='"Liberation Sans", sans-serif' font-size="11" fill="#595959" text-anchor="middle" font-weight="normal" font-style="normal" textLength="29.6" lengthAdjust="spacingAndGlyphs" stroke="#595959" stroke-width="0.25">Y2013</text>
<rect x="402.90" y="453" width="21.7" height="127" fill="#5b9bd5"/>
<text x="413.75" y="598.9" font-family='"Liberation Sans", sans-serif' font-size="11" fill="#595959" text-anchor="middle" font-weight="normal" font-style="normal" textLength="29.6" lengthAdjust="spacingAndGlyphs" stroke="#595959" stroke-width="0.25">Y2014</text>
<rect x="470.40" y="443" width="21.7" height="137" fill="#5b9bd5"/>
<text x="481.25" y="598.9" font-family='"Liberation Sans", sans-serif' font-size="11" fill="#595959" text-anchor="middle" font-weight="normal" font-style="normal" textLength="29.6" lengthAdjust="spacingAndGlyphs" stroke="#595959" stroke-width="0.25">Y2015</text>
<rect x="537.90" y="427" width="21.7" height="153" fill="#5b9bd5"/>
<text x="548.75" y="598.9" font-family='"Liberation Sans", sans-serif' font-size="11" fill="#595959" text-anchor="middle" font-weight="normal" font-style="normal" textLength="29.6" lengthAdjust="spacingAndGlyphs" stroke="#595959" stroke-width="0.25">Y2016</text>
<text transform="translate(146.8,491.2) rotate(-90)" x="0" y="0" font-family='"Liberation Sans", sans-serif' font-size="11.5" font-weight="bold" fill="#595959" text-anchor="middle" textLength="60.5" lengthAdjust="spacingAndGlyphs">Y Axis Title</text>
<text x="380" y="620.1" font-family='"Liberation Sans", sans-serif' font-size="12.5" fill="#ff0000" text-anchor="middle" font-weight="normal" font-style="italic" textLength="58" lengthAdjust="spacingAndGlyphs" >X Axis Title</text>
<circle cx="118.5" cy="353.5" r="4.6" fill="#fff" stroke="#555" stroke-width="1.8"/>
<circle cx="357.5" cy="353.5" r="4.6" fill="#fff" stroke="#555" stroke-width="1.8"/>
<circle cx="597.5" cy="353.5" r="4.6" fill="#fff" stroke="#555" stroke-width="1.8"/>
<circle cx="118.5" cy="496.5" r="4.6" fill="#fff" stroke="#555" stroke-width="1.8"/>
<circle cx="597.5" cy="496.5" r="4.6" fill="#fff" stroke="#555" stroke-width="1.8"/>
<circle cx="118.5" cy="640.5" r="4.6" fill="#fff" stroke="#555" stroke-width="1.8"/>
<circle cx="357.5" cy="640.5" r="4.6" fill="#fff" stroke="#555" stroke-width="1.8"/>
<circle cx="597.5" cy="640.5" r="4.6" fill="#fff" stroke="#555" stroke-width="1.8"/>
<rect x="611.5" y="352.5" width="27" height="27" fill="#fff" stroke="#5a5a5a" stroke-width="1"/>
<rect x="611.5" y="390.5" width="27" height="27" fill="#fff" stroke="#5a5a5a" stroke-width="1"/>
<rect x="611.5" y="428.5" width="27" height="27" fill="#fff" stroke="#5a5a5a" stroke-width="1"/>
<path d="M614 365.5 L635 365.5 M624.5 355 L624.5 376" stroke="#27a04b" stroke-width="1.1"/>
<rect x="621.6" y="400" width="17.4" height="3.4" rx="1.7" transform="rotate(-50 630.3 401.7)" fill="#fff" stroke="#4a4a4a" stroke-width="1"/>
<path d="M613.2 411.4 C616 411.9 618.4 410.6 619.4 408.4 C620.4 406.4 622.6 405.6 624.3 406.5 C625.9 407.5 626 409.8 624.7 411.4 C622.6 413.9 617.8 414.6 613.2 411.4 Z" fill="#72aae6" stroke="#3a7bd5" stroke-width="0.9"/>
<path d="M614.5 432.5 L634.5 432.5 L634.5 435 L626.5 443.5 L626.5 452.5 L622.5 452.5 L622.5 443.5 L614.5 435 Z" fill="#f7f7f7" stroke="#4a4a4a" stroke-width="1.1" stroke-linejoin="miter"/>
<rect x="864" y="128" width="15" height="537" rx="7.5" fill="#f7f7f7"/>
<path d="M867.7 138.5 L876 138.5 L871.85 132 Z" fill="#6e6e6e"/>
<rect x="867.3" y="144" width="8.7" height="466" rx="4.35" fill="#6e6e6e"/>
<path d="M867.6 653.5 L876.3 653.5 L871.95 660.8 Z" fill="#6e6e6e"/>
<path d="M109 663 L111.5 663 Q116.5 663 116.5 668 L116.5 686.5 Q116.5 691 121 691 L170 691 Q174.5 691 174.5 686.5 L174.5 668 Q174.5 663 179.5 663 L182 663 Z" fill="#fff"/>
<path d="M110 663.5 L111.5 663.5 Q116.5 663.5 116.5 668.5 L116.5 686.5 Q116.5 690.5 120.5 690.5 L170.5 690.5 Q174.5 690.5 174.5 686.5 L174.5 668.5 Q174.5 663.5 179.5 663.5 L181 663.5" fill="none" stroke="#dcdcdc" stroke-width="1"/>
<rect x="105" y="662.5" width="82" height="0.6" fill="#fff"/>
<text x="125.1" y="680.8" font-family='"Liberation Sans", sans-serif' font-size="13" fill="#262626" text-anchor="start" font-weight="normal" font-style="normal" textLength="40.8" lengthAdjust="spacingAndGlyphs" stroke="#262626" stroke-width="0.55">Sheet1</text>
<rect x="125" y="685.6" width="41" height="2.2" fill="#107c41"/>
<rect x="178" y="671" width="1" height="16" fill="#c8c8c8"/>
<path d="M221 678.5 L232.6 678.5 M226.8 673 L226.8 684.5" stroke="#333" stroke-width="1.1"/>
<path d="M35.3 674.2 L30.3 678.5 L35.3 682.8" fill="none" stroke="#8a8a8a" stroke-width="1.2"/>
<path d="M62.6 674.2 L67.6 678.5 L62.6 682.8" fill="none" stroke="#8a8a8a" stroke-width="1.2"/>
<rect x="531.1" y="675.0" width="1.8" height="1.8" fill="#1a1a1a"/>
<rect x="531.1" y="679.1" width="1.8" height="1.8" fill="#1a1a1a"/>
<rect x="531.1" y="683.2" width="1.8" height="1.8" fill="#1a1a1a"/>
<rect x="548" y="670.2" width="315" height="16.3" rx="8.15" fill="#f6f6f6"/>
<path d="M560.1 674 L560.1 683 L553.2 678.5 Z" fill="#6e6e6e"/>
<rect x="564.8" y="674" width="260.2" height="8.9" rx="4.45" fill="#6e6e6e"/>
<path d="M851 674 L851 683 L858 678.5 Z" fill="#6e6e6e"/>
<rect x="1" y="695" width="881" height="1" fill="#fbfbfb"/>
<rect x="1" y="696" width="881" height="21" fill="#f3f3f3"/>
<text x="12.5" y="710.6" font-family='"Liberation Sans", sans-serif' font-size="11.2" fill="#2b2b2b" text-anchor="start" font-weight="normal" font-style="normal" textLength="30.2" lengthAdjust="spacingAndGlyphs" >Ready</text>
<g fill="none" stroke="#1f1f1f" stroke-width="1.1">
<path d="M67.8 711.5 L63.7 711.5 L63.7 700.6 L76.6 700.6 L76.6 703.6"/>
<path d="M63.7 702.7 L76.6 702.7 M65.6 705.8 L68.2 705.8 M65.6 708.1 L67.8 708.1"/>
<circle cx="72.5" cy="708" r="3.8"/>
</g>
<circle cx="72.5" cy="708" r="1.8" fill="#1f1f1f"/>
<g fill="none" stroke="#1f1f1f" stroke-width="1.05" stroke-linejoin="round" stroke-linecap="round">
<circle cx="101.3" cy="701.3" r="1.6"/>
<path d="M95.3 702.3 C96.3 704.4 98.3 705 99.8 705 L102.8 705 C104.3 705 106 704.4 107 702.3"/>
<path d="M99.8 705 L99.6 708.8 L97.9 712.3 M102.8 705 L103 707.3"/>
<path d="M103.8 707.6 L108.8 712.6 M108.8 707.6 L103.8 712.6"/>
</g>
<text x="113.4" y="710.1" font-family='"Liberation Sans", sans-serif' font-size="11.5" fill="#1f1f1f" text-anchor="start" font-weight="bold" font-style="normal" textLength="125.1" lengthAdjust="spacingAndGlyphs" >Accessibility: Investigate</text>
<text x="341.5" y="710.6" font-family='"Liberation Sans", sans-serif' font-size="11.2" fill="#2b2b2b" text-anchor="start" font-weight="normal" font-style="normal" textLength="73.2" lengthAdjust="spacingAndGlyphs" >Average: 20.65</text>
<text x="431" y="710.6" font-family='"Liberation Sans", sans-serif' font-size="11.2" fill="#2b2b2b" text-anchor="start" font-weight="normal" font-style="normal" textLength="50" lengthAdjust="spacingAndGlyphs" >Count: 14</text>
<text x="497.5" y="710.6" font-family='"Liberation Sans", sans-serif' font-size="11.2" fill="#2b2b2b" text-anchor="start" font-weight="normal" font-style="normal" textLength="54.5" lengthAdjust="spacingAndGlyphs" >Sum: 123.9</text>
<rect x="571" y="696" width="39.7" height="20.5" fill="#dedede"/>
<rect x="584.1" y="699.2" width="12.9" height="12.7" fill="#1f1f1f"/>
<rect x="585.50" y="700.60" width="2.6" height="2.6" fill="#dedede"/>
<rect x="585.50" y="704.50" width="2.6" height="2.6" fill="#dedede"/>
<rect x="585.50" y="708.40" width="2.6" height="2.6" fill="#dedede"/>
<rect x="589.40" y="700.60" width="2.6" height="2.6" fill="#dedede"/>
<rect x="589.40" y="704.50" width="2.6" height="2.6" fill="#dedede"/>
<rect x="589.40" y="708.40" width="2.6" height="2.6" fill="#dedede"/>
<rect x="593.30" y="700.60" width="2.6" height="2.6" fill="#dedede"/>
<rect x="593.30" y="704.50" width="2.6" height="2.6" fill="#dedede"/>
<rect x="593.30" y="708.40" width="2.6" height="2.6" fill="#dedede"/>
<g fill="none" stroke="#1f1f1f" stroke-width="1.2"><rect x="624.5" y="699.5" width="13" height="12"/><rect x="627.5" y="701.5" width="7" height="8"/><path d="M628.5 703.5 L633.5 703.5 M628.5 705.5 L633.5 705.5 M628.5 707.5 L633.5 707.5" stroke-width="1"/></g>
<g fill="none" stroke="#1f1f1f" stroke-width="1.2"><rect x="664.5" y="699.5" width="13" height="12"/><path d="M668.5 699.5 L668.5 706.5 M672.5 699.5 L672.5 706.5 M664.5 706.5 L672.5 706.5"/></g>
<path d="M697.2 705.7 L704.2 705.7" stroke="#333" stroke-width="1.1"/>
<rect x="710" y="705.7" width="100" height="1" fill="#808080"/>
<rect x="757.8" y="700.9" width="5.4" height="11" fill="#5a5a5a"/>
<path d="M815 706 L822.7 706 M818.85 702 L818.85 710" stroke="#333" stroke-width="1.1"/>
<text x="836.4" y="710.1" font-family='"Liberation Sans", sans-serif' font-size="11.2" fill="#2b2b2b" text-anchor="start" font-weight="normal" font-style="normal" textLength="26.3" lengthAdjust="spacingAndGlyphs" >100%</text>
<rect x="0.5" y="0.5" width="882" height="717" fill="none" stroke="#107c41" stroke-width="1"/>
</svg>
</body></html>
